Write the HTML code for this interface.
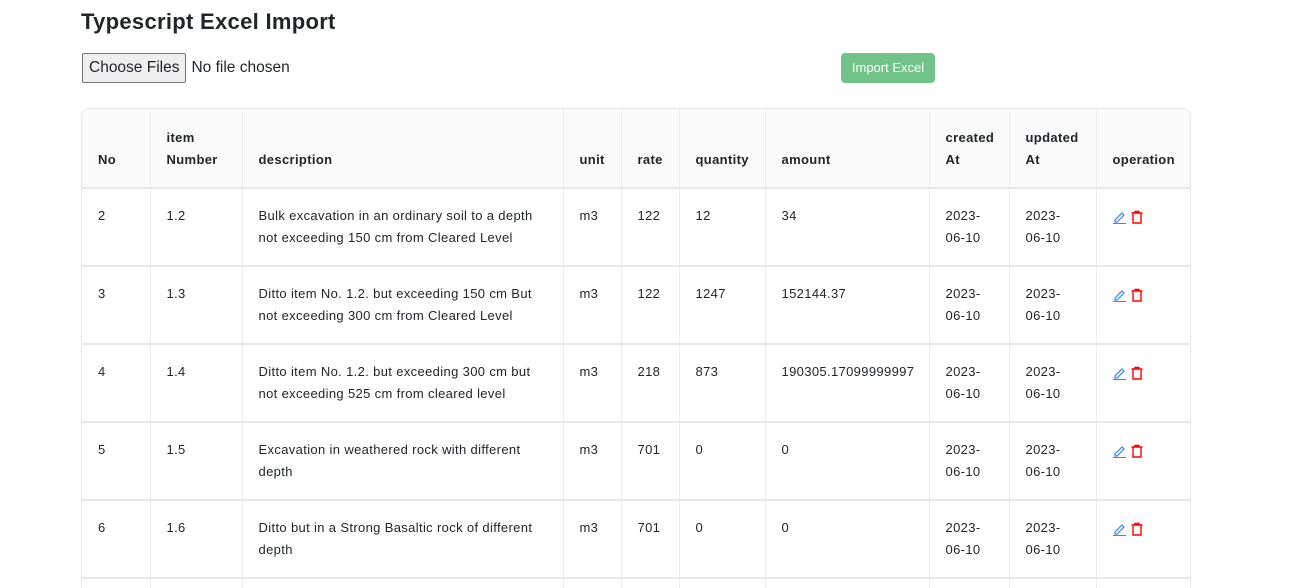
<!DOCTYPE html>
<html><head><meta charset="utf-8"><style>
html,body{margin:0;height:588px;overflow:hidden}
body{background:#fff;font-family:"Liberation Sans",sans-serif;color:#212529;width:1289px;position:relative}
h1{position:absolute;left:81px;top:9px;margin:0;font-size:22px;font-weight:bold;letter-spacing:0.3px}
.file{position:absolute;left:82px;top:53px;height:30px;font-size:15.5px;display:flex;align-items:center}
.file span.b{border:1px solid #767676;background:#efefef;border-radius:2px;padding:0 6px;height:30px;line-height:28px;box-sizing:border-box;margin-right:5px}
.imp{position:absolute;left:841px;top:53px;width:94px;height:30px;background:#72c38a;border-radius:4px;color:#fff;font-size:13px;line-height:30px;text-align:center}
.tbl{position:absolute;left:81px;top:108px;width:1108px;border:1px solid #e6e6e6;border-radius:8px;overflow:hidden;height:490px}
table{border-collapse:collapse;table-layout:fixed;font-size:13px;width:1108px;letter-spacing:0.35px}
td,th{border-right:1px solid #ececec;border-bottom:2px solid #e8e8e8;padding:16px 16px 0;vertical-align:top;line-height:22px;text-align:left;box-sizing:border-box;overflow:hidden}
th{background:#fafafa;font-weight:bold;height:79px;vertical-align:bottom;padding-bottom:16px;font-size:13px}
td{height:78px}
td:last-child,th:last-child{border-right:none}
svg{vertical-align:middle}
</style></head><body>
<h1>Typescript Excel Import</h1>
<div class="file"><span class="b">Choose Files</span>No file chosen</div>
<div class="imp">Import Excel</div>
<div class="tbl"><table>
<colgroup><col style="width:68px"><col style="width:92px"><col style="width:321px"><col style="width:58px"><col style="width:58px"><col style="width:86px"><col style="width:164px"><col style="width:80px"><col style="width:87px"><col style="width:94px"></colgroup>
<tr><th>No</th><th>item Number</th><th>description</th><th>unit</th><th>rate</th><th>quantity</th><th>amount</th><th>created At</th><th>updated At</th><th>operation</th></tr>
<tr><td>2</td><td>1.2</td><td>Bulk excavation in an ordinary soil to a depth not exceeding 150 cm from Cleared Level</td><td>m3</td><td>122</td><td>12</td><td>34</td><td>2023-06-10</td><td>2023-06-10</td><td class="op"></td></tr>
<tr><td>3</td><td>1.3</td><td>Ditto item No. 1.2. but exceeding 150 cm But not exceeding 300 cm from Cleared Level</td><td>m3</td><td>122</td><td>1247</td><td>152144.37</td><td>2023-06-10</td><td>2023-06-10</td><td class="op"></td></tr>
<tr><td>4</td><td>1.4</td><td>Ditto item No. 1.2. but exceeding 300 cm but not exceeding 525 cm from cleared level</td><td>m3</td><td>218</td><td>873</td><td>190305.17099999997</td><td>2023-06-10</td><td>2023-06-10</td><td class="op"></td></tr>
<tr><td>5</td><td>1.5</td><td>Excavation in weathered rock with different depth</td><td>m3</td><td>701</td><td>0</td><td>0</td><td>2023-06-10</td><td>2023-06-10</td><td class="op"></td></tr>
<tr><td>6</td><td>1.6</td><td>Ditto but in a Strong Basaltic rock of different depth</td><td>m3</td><td>701</td><td>0</td><td>0</td><td>2023-06-10</td><td>2023-06-10</td><td class="op"></td></tr>
<tr><td></td><td></td><td></td><td></td><td></td><td></td><td></td><td></td><td></td><td></td></tr>
</table></div>
<script>
document.querySelectorAll('td').forEach(function(c){if(/^2023-06-10$/.test(c.textContent))c.innerHTML='2023-<br>06-10';});
document.querySelectorAll('.op').forEach(function(c){c.innerHTML='<svg width="14" height="14" viewBox="0 0 14 14"><path d="M2 10 L9 3 L11 5 L4 12 L2 12 Z" fill="none" stroke="#3b82f6" stroke-width="1.2"/><path d="M0 13.5 H13" stroke="#3b82f6" stroke-width="1"/></svg><svg width="14" height="14" viewBox="0 0 14 14" style="margin-left:3px"><path d="M1.5 3 H12.5 M5 3 V1.5 H9 V3 M3 3 V13 H11 V3" fill="none" stroke="#f00" stroke-width="1.4"/></svg>';});
</script>
</body></html>
